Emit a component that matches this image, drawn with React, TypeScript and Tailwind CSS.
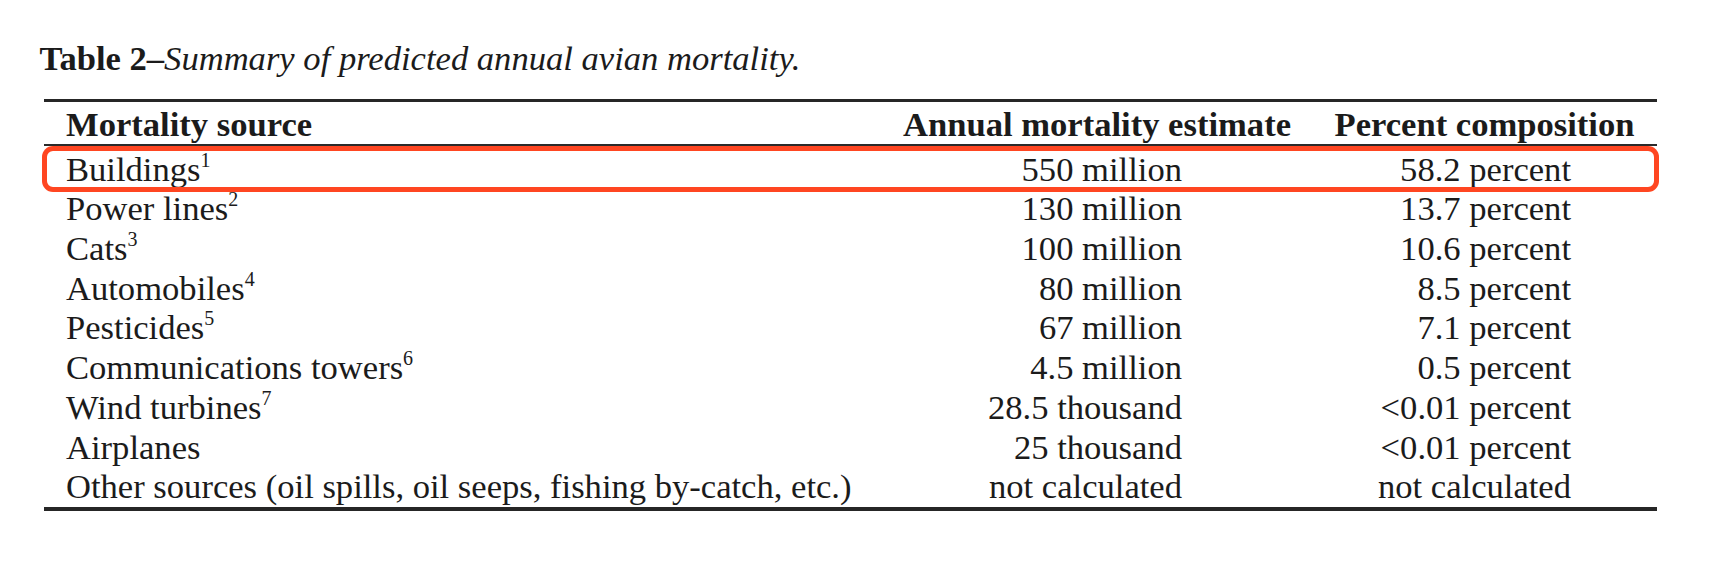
import React from "react";

type Row = { src: string; sup?: string; est: string; pct: string };

const rows: Row[] = [
  { src: "Buildings", sup: "1", est: "550 million", pct: "58.2 percent" },
  { src: "Power lines", sup: "2", est: "130 million", pct: "13.7 percent" },
  { src: "Cats", sup: "3", est: "100 million", pct: "10.6 percent" },
  { src: "Automobiles", sup: "4", est: "80 million", pct: "8.5 percent" },
  { src: "Pesticides", sup: "5", est: "67 million", pct: "7.1 percent" },
  { src: "Communications towers", sup: "6", est: "4.5 million", pct: "0.5 percent" },
  { src: "Wind turbines", sup: "7", est: "28.5 thousand", pct: "<0.01 percent" },
  { src: "Airplanes", est: "25 thousand", pct: "<0.01 percent" },
  {
    src: "Other sources (oil spills, oil seeps, fishing by-catch, etc.)",
    est: "not calculated",
    pct: "not calculated",
  },
];

export default function App() {
  return (
    <div className="w-[1714px] h-[564px] overflow-hidden bg-white font-['Liberation_Serif','Times_New_Roman',serif] text-[34.6px] leading-[39.7px] text-[#1b1b1b]">
      <div className="pl-[39.5px] pt-[38.5px] whitespace-nowrap">
        <span className="font-bold">Table 2–</span>
        <span className="italic">Summary of predicted annual avian mortality.</span>
      </div>

      <div className="ml-[43.5px] mt-[21px] w-[1613.5px] border-t-[3px] border-b-4 border-[#262626]">
        <div className="pt-[3px] border-b-2 border-[#2a2a2a]">
          <div className="grid grid-cols-[838.5px_430px_345px] leading-[39px] font-bold whitespace-nowrap">
            <div className="pl-[22.5px]">Mortality source</div>
            <div className="flex justify-center">Annual mortality estimate</div>
            <div className="flex justify-center">Percent composition</div>
          </div>
        </div>

        <div className="pt-[3.5px]">
          {rows.map((r, i) => (
            <div
              key={i}
              className="relative grid grid-cols-[838.5px_430px_345px] h-[39.7px] whitespace-nowrap"
            >
              <div className="pl-[22.5px]">
                {r.src}
                {r.sup && (
                  <span className="relative top-[-14px] text-[20px] leading-none align-baseline">
                    {r.sup}
                  </span>
                )}
              </div>
              <div className="text-right pr-[130px]">{r.est}</div>
              <div className="text-right pr-[86px]">{r.pct}</div>
              {i === 0 && (
                <div className="pointer-events-none absolute top-[-3.5px] bottom-[-2.5px] left-[-2px] right-[-1.5px] rounded-[11px] shadow-[inset_0_0_0_5px_#ff4621]" />
              )}
            </div>
          ))}
        </div>
      </div>
    </div>
  );
}
